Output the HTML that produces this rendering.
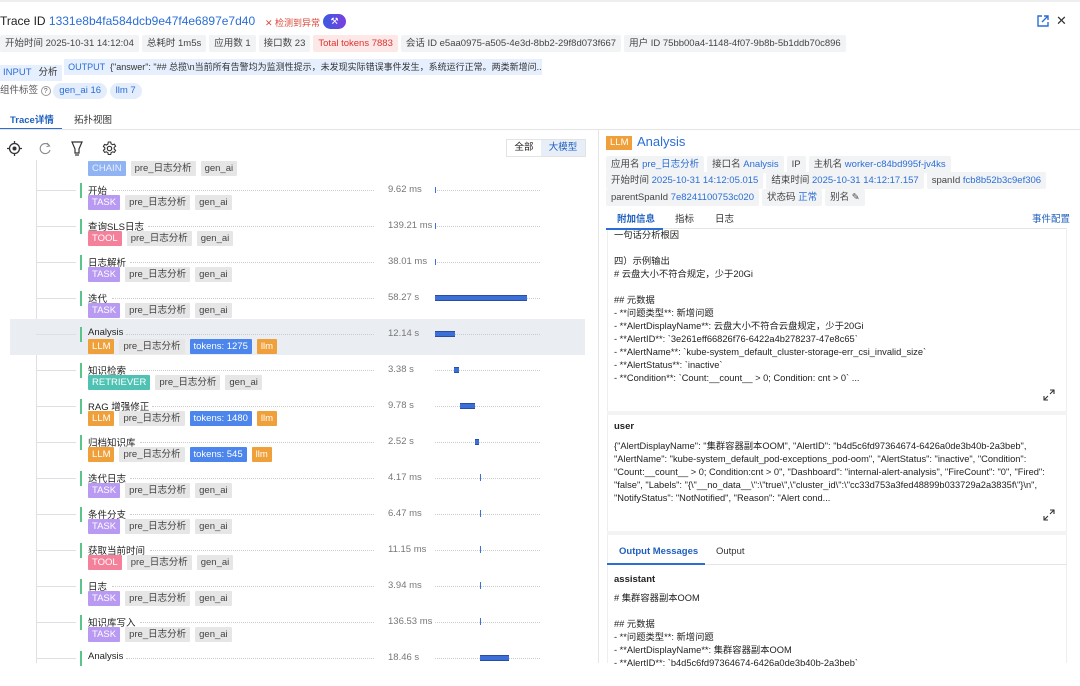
<!DOCTYPE html>
<html><head><meta charset="utf-8"><style>
*{box-sizing:border-box;margin:0;padding:0}
body{width:1080px;height:663px;overflow:hidden;background:#fff;font-family:"Liberation Sans","Noto Sans CJK SC",sans-serif;color:#333;font-size:10px;position:relative}
.a{position:absolute;white-space:nowrap}
.chip{display:inline-block;background:#f2f3f5;color:#444;height:17px;line-height:17px;padding:0 5px;margin-right:3px;font-size:9.5px;border-radius:2px}
.blue{color:#2a6ed6}
.tg{display:inline-block;height:15px;line-height:15px;padding:0 4px;margin-right:5px;font-size:9.5px;background:#e6e6e6;color:#444;border-radius:1px}
.task{background:#b99af2;color:#fff}.tool{background:#f4809a;color:#fff}.llm{background:#f0a03a;color:#fff}.tok{background:#4c86ec;color:#fff}.ret{background:#4fc2b4;color:#fff}.chain{background:#8fb3f3;color:#eef}
.row{position:absolute;left:0;width:590px;height:36px}
.row .h{position:absolute;left:36px;top:8px;width:40px;border-top:1px solid #dde1e6}
.row .g{position:absolute;left:80px;top:1px;width:2px;height:15px;background:#5ac48a}
.row .n{position:absolute;left:88px;top:1px;font-size:9.5px;color:#222}
.row .d{position:absolute;top:8px;right:216px;border-top:1px dotted #ccc}
.row .t{position:absolute;left:388px;top:2px;font-size:9.5px;color:#777}
.row .tl{position:absolute;left:435px;top:8px;width:105px;border-top:1px dotted #ccc}
.row .b{position:absolute;background:#3c6fd8;border-top:1px solid #2b4fa0;border-bottom:1px solid #2b4fa0}
.row .tags{position:absolute;left:88px;top:13px}
.txt{font-size:9.3px;line-height:13px;color:#222}
</style></head><body>
<div class="a" style="left:0;top:0;width:1080px;height:2px;background:#eee"></div>
<div class="a" style="left:0;top:14px;font-size:12px;color:#222">Trace ID <span class="blue">1331e8b4fa584dcb9e47f4e6897e7d40</span></div>
<div class="a" style="left:265px;top:16px;color:#d84a3a;font-size:9px">✕ 检测到异常</div>
<div class="a" style="left:323px;top:14px;width:23px;height:15px;border-radius:8px;background:linear-gradient(90deg,#3a5be0,#7b3fe0);color:#fff;font-size:9px;text-align:center;line-height:15px">⚒</div>
<svg class="a" style="left:1037px;top:15px" width="12" height="12" viewBox="0 0 12 12"><path d="M5 1H1v10h10V7M7 1h4v4M11 1L5 7" fill="none" stroke="#2a6ed6" stroke-width="1.4"/></svg>
<div class="a" style="left:1056px;top:13px;font-size:13px;color:#333">✕</div>
<div class="a" style="left:0;top:35px"><span class="chip">开始时间 2025-10-31 14:12:04</span><span class="chip">总耗时 1m5s</span><span class="chip">应用数 1</span><span class="chip">接口数 23</span><span class="chip" style="background:#fde8e8;color:#d33">Total tokens 7883</span><span class="chip">会话 ID e5aa0975-a505-4e3d-8bb2-29f8d073f667</span><span class="chip">用户 ID 75bb00a4-1148-4f07-9b8b-5b1ddb70c896</span></div>
<div class="a" style="left:0;top:59px;height:16px;line-height:16px;font-size:9.5px"><span style="background:#e6effd;padding:0 3px 0 3px;color:#2a6ed6;display:inline-block">INPUT</span><span style="background:#e6effd;padding:0 4px;display:inline-block">分析</span> <span style="background:#e6effd;padding:0 4px;display:inline-block;width:478px;overflow:hidden;font-size:9px"><span class="blue">OUTPUT</span> &nbsp;{"answer": "## 总揽\n当前所有告警均为监测性提示，未发现实际错误事件发生，系统运行正常。两类新增问...</span></div>
<div class="a" style="left:0;top:83px;font-size:9.5px;color:#555;line-height:16px">组件标签 <span style="display:inline-block;border:1px solid #999;border-radius:50%;width:10px;height:10px;font-size:7px;line-height:9px;text-align:center">?</span> <span style="background:#e3edfb;color:#2a6ed6;padding:0 6px;border-radius:8px;display:inline-block">gen_ai 16</span> <span style="background:#e3edfb;color:#2a6ed6;padding:0 6px;border-radius:8px;display:inline-block">llm 7</span></div>
<div class="a" style="left:10px;top:112px;font-size:9.5px;color:#1f5fbf;font-weight:bold">Trace详情</div>
<div class="a" style="left:74px;top:112px;font-size:9.5px;color:#333">拓扑视图</div>
<div class="a" style="left:0;top:128px;width:62px;height:2px;background:#2a6ed6"></div>
<div class="a" style="left:0;top:129px;width:1080px;border-top:1px solid #e5e5e5"></div>
<div class="a" style="left:598px;top:130px;height:533px;border-left:1px solid #e5e5e5"></div>
<!-- toolbar -->
<svg class="a" style="left:7px;top:141px" width="15" height="15" viewBox="0 0 15 15"><circle cx="7.5" cy="7.5" r="5" fill="none" stroke="#333" stroke-width="1.3"/><circle cx="7.5" cy="7.5" r="2" fill="#333"/><path d="M7.5 0v2.5M7.5 12.5V15M0 7.5h2.5M12.5 7.5H15" stroke="#333" stroke-width="1.3"/></svg>
<svg class="a" style="left:39px;top:142px" width="13" height="13" viewBox="0 0 13 13"><path d="M10.5 4A5 5 0 1 0 11 8" fill="none" stroke="#888" stroke-width="1.1"/><path d="M8 1l2.5 3-3 .5" fill="none" stroke="#888" stroke-width="1.1"/></svg>
<svg class="a" style="left:71px;top:141px" width="12" height="15" viewBox="0 0 12 15"><path d="M1 1h10L8 8v4H4V8z" fill="none" stroke="#333" stroke-width="1.2"/><path d="M4 14h4" stroke="#333" stroke-width="1.2"/></svg>
<svg class="a" style="left:102px;top:141px" width="15" height="15" viewBox="0 0 15 15"><circle cx="7.5" cy="7.5" r="2.2" fill="none" stroke="#333" stroke-width="1.2"/><path d="M6.3 1h2.4l.4 1.8 1.5.9 1.8-.6 1.2 2-1.4 1.3v1.7l1.4 1.3-1.2 2-1.8-.6-1.5.9-.4 1.8H6.3l-.4-1.8-1.5-.9-1.8.6-1.2-2 1.4-1.3V6.7L1.4 5.4l1.2-2 1.8.6 1.5-.9z" fill="none" stroke="#333" stroke-width="1.1"/></svg>
<div class="a" style="left:506px;top:139px;width:80px;height:18px;border:1px solid #e3e3e3;font-size:9.5px;line-height:16px"><span style="display:inline-block;width:34px;text-align:center;color:#222">全部</span><span style="display:inline-block;width:44px;text-align:center;background:#e8eef8;color:#1f5fbf">大模型</span></div>
<!-- tree -->
<div class="a" style="left:36px;top:160px;height:503px;border-left:1px solid #dde1e6"></div>
<div class="a" style="left:10px;top:319px;width:575px;height:36px;background:#eaedf2"></div>
<div class="a" style="left:88px;top:161px"><span class="tg chain">CHAIN</span><span class="tg">pre_日志分析</span><span class="tg">gen_ai</span></div>

<div class="row" style="top:182px"><div class="h"></div><div class="g"></div><div class="n">开始</div><div class="d" style="left:112px"></div><div class="t">9.62 ms</div><div class="tl"></div><div class="b" style="left:435px;top:5px;width:1px;height:6px;border:0"></div><div class="tags"><span class="tg task">TASK</span><span class="tg">pre_日志分析</span><span class="tg">gen_ai</span></div></div>
<div class="row" style="top:218px"><div class="h"></div><div class="g"></div><div class="n">查询SLS日志</div><div class="d" style="left:148px"></div><div class="t">139.21 ms</div><div class="tl"></div><div class="b" style="left:435px;top:5px;width:1px;height:6px;border:0"></div><div class="tags"><span class="tg tool">TOOL</span><span class="tg">pre_日志分析</span><span class="tg">gen_ai</span></div></div>
<div class="row" style="top:254px"><div class="h"></div><div class="g"></div><div class="n">日志解析</div><div class="d" style="left:130px"></div><div class="t">38.01 ms</div><div class="tl"></div><div class="b" style="left:435px;top:5px;width:1px;height:6px;border:0"></div><div class="tags"><span class="tg task">TASK</span><span class="tg">pre_日志分析</span><span class="tg">gen_ai</span></div></div>
<div class="row" style="top:290px"><div class="h"></div><div class="g"></div><div class="n">迭代</div><div class="d" style="left:112px"></div><div class="t">58.27 s</div><div class="tl"></div><div class="b" style="left:435px;top:5px;width:92px;height:6px"></div><div class="tags"><span class="tg task">TASK</span><span class="tg">pre_日志分析</span><span class="tg">gen_ai</span></div></div>
<div class="row" style="top:326px"><div class="h"></div><div class="g"></div><div class="n">Analysis</div><div class="d" style="left:126px"></div><div class="t">12.14 s</div><div class="tl"></div><div class="b" style="left:435px;top:5px;width:20px;height:6px"></div><div class="tags"><span class="tg llm">LLM</span><span class="tg">pre_日志分析</span><span class="tg tok">tokens: 1275</span><span class="tg llm">llm</span></div></div>
<div class="row" style="top:362px"><div class="h"></div><div class="g"></div><div class="n">知识检索</div><div class="d" style="left:130px"></div><div class="t">3.38 s</div><div class="tl"></div><div class="b" style="left:454px;top:5px;width:5px;height:6px"></div><div class="tags"><span class="tg ret">RETRIEVER</span><span class="tg">pre_日志分析</span><span class="tg">gen_ai</span></div></div>
<div class="row" style="top:398px"><div class="h"></div><div class="g"></div><div class="n">RAG 增强修正</div><div class="d" style="left:152px"></div><div class="t">9.78 s</div><div class="tl"></div><div class="b" style="left:460px;top:5px;width:15px;height:6px"></div><div class="tags"><span class="tg llm">LLM</span><span class="tg">pre_日志分析</span><span class="tg tok">tokens: 1480</span><span class="tg llm">llm</span></div></div>
<div class="row" style="top:434px"><div class="h"></div><div class="g"></div><div class="n">归档知识库</div><div class="d" style="left:140px"></div><div class="t">2.52 s</div><div class="tl"></div><div class="b" style="left:475px;top:5px;width:4px;height:6px"></div><div class="tags"><span class="tg llm">LLM</span><span class="tg">pre_日志分析</span><span class="tg tok">tokens: 545</span><span class="tg llm">llm</span></div></div>
<div class="row" style="top:470px"><div class="h"></div><div class="g"></div><div class="n">迭代日志</div><div class="d" style="left:130px"></div><div class="t">4.17 ms</div><div class="tl"></div><div class="b" style="left:480px;top:4px;width:1px;height:7px;border:0"></div><div class="tags"><span class="tg task">TASK</span><span class="tg">pre_日志分析</span><span class="tg">gen_ai</span></div></div>
<div class="row" style="top:506px"><div class="h"></div><div class="g"></div><div class="n">条件分支</div><div class="d" style="left:130px"></div><div class="t">6.47 ms</div><div class="tl"></div><div class="b" style="left:480px;top:4px;width:1px;height:7px;border:0"></div><div class="tags"><span class="tg task">TASK</span><span class="tg">pre_日志分析</span><span class="tg">gen_ai</span></div></div>
<div class="row" style="top:542px"><div class="h"></div><div class="g"></div><div class="n">获取当前时间</div><div class="d" style="left:150px"></div><div class="t">11.15 ms</div><div class="tl"></div><div class="b" style="left:480px;top:4px;width:1px;height:7px;border:0"></div><div class="tags"><span class="tg tool">TOOL</span><span class="tg">pre_日志分析</span><span class="tg">gen_ai</span></div></div>
<div class="row" style="top:578px"><div class="h"></div><div class="g"></div><div class="n">日志</div><div class="d" style="left:112px"></div><div class="t">3.94 ms</div><div class="tl"></div><div class="b" style="left:480px;top:4px;width:1px;height:7px;border:0"></div><div class="tags"><span class="tg task">TASK</span><span class="tg">pre_日志分析</span><span class="tg">gen_ai</span></div></div>
<div class="row" style="top:614px"><div class="h"></div><div class="g"></div><div class="n">知识库写入</div><div class="d" style="left:140px"></div><div class="t">136.53 ms</div><div class="tl"></div><div class="b" style="left:480px;top:4px;width:1px;height:7px;border:0"></div><div class="tags"><span class="tg task">TASK</span><span class="tg">pre_日志分析</span><span class="tg">gen_ai</span></div></div>
<div class="row" style="top:650px"><div class="h"></div><div class="g"></div><div class="n">Analysis</div><div class="d" style="left:126px"></div><div class="t">18.46 s</div><div class="tl"></div><div class="b" style="left:480px;top:5px;width:29px;height:6px"></div></div>

<!-- right panel -->
<div class="a" style="left:606px;top:136px;height:14px;line-height:14px;padding:0 4px;background:#f0a03a;color:#fff;font-size:9.5px">LLM</div>
<div class="a" style="left:637px;top:134px;font-size:13px;color:#2a6ed6">Analysis</div>
<div class="a" style="left:606px;top:156px"><span class="chip">应用名 <span class="blue">pre_日志分析</span></span><span class="chip">接口名 <span class="blue">Analysis</span></span><span class="chip">IP</span><span class="chip">主机名 <span class="blue">worker-c84bd995f-jv4ks</span></span></div>
<div class="a" style="left:606px;top:172px"><span class="chip">开始时间 <span class="blue">2025-10-31 14:12:05.015</span></span><span class="chip">结束时间 <span class="blue">2025-10-31 14:12:17.157</span></span><span class="chip">spanId <span class="blue">fcb8b52b3c9ef306</span></span></div>
<div class="a" style="left:606px;top:189px"><span class="chip">parentSpanId <span class="blue">7e8241100753c020</span></span><span class="chip">状态码 <span class="blue">正常</span></span><span class="chip">别名 ✎</span></div>
<div class="a" style="left:617px;top:211px;font-size:9.5px;color:#1f5fbf;font-weight:bold">附加信息</div>
<div class="a" style="left:675px;top:211px;font-size:9.5px">指标</div>
<div class="a" style="left:715px;top:211px;font-size:9.5px">日志</div>
<div class="a" style="left:1032px;top:211px;font-size:9.5px;color:#1f5fbf">事件配置</div>
<div class="a" style="left:606px;top:228px;width:461px;border-top:1px solid #e5e5e5"></div>
<div class="a" style="left:606px;top:228px;width:57px;height:2px;background:#2a6ed6"></div>
<div class="a" style="left:607px;top:230px;width:460px;height:433px;border-left:1px solid #eee;border-right:1px solid #eee"></div>
<div class="a txt" style="left:614px;top:229px">一句话分析根因<br><br>四）示例输出<br># 云盘大小不符合规定，少于20Gi<br><br>## 元数据<br>- **问题类型**: 新增问题<br>- **AlertDisplayName**: 云盘大小不符合云盘规定，少于20Gi<br>- **AlertID**: `3e261eff66826f76-6422a4b278237-47e8c65`<br>- **AlertName**: `kube-system_default_cluster-storage-err_csi_invalid_size`<br>- **AlertStatus**: `inactive`<br>- **Condition**: `Count:__count__ &gt; 0; Condition: cnt &gt; 0` ...</div>
<svg class="a" style="left:1043px;top:389px" width="12" height="12" viewBox="0 0 12 12"><path d="M7 1h4v4M11 1L7 5M5 11H1V7M1 11l4-4" fill="none" stroke="#333" stroke-width="1.1"/></svg>
<div class="a" style="left:607px;top:411px;width:460px;height:4px;background:#f3f3f3"></div>
<div class="a" style="left:614px;top:421px;font-size:9.5px;font-weight:bold;color:#222">user</div>
<div class="a txt" style="left:614px;top:440px;white-space:normal;width:448px">{"AlertDisplayName": "集群容器副本OOM", "AlertID": "b4d5c6fd97364674-6426a0de3b40b-2a3beb",<br>"AlertName": "kube-system_default_pod-exceptions_pod-oom", "AlertStatus": "inactive", "Condition":<br>"Count:__count__ &gt; 0; Condition:cnt &gt; 0", "Dashboard": "internal-alert-analysis", "FireCount": "0", "Fired":<br>"false", "Labels": "{\"__no_data__\":\"true\",\"cluster_id\":\"cc33d753a3fed48899b033729a2a3835f\"}\n",<br>"NotifyStatus": "NotNotified", "Reason": "Alert cond...</div>
<svg class="a" style="left:1043px;top:509px" width="12" height="12" viewBox="0 0 12 12"><path d="M7 1h4v4M11 1L7 5M5 11H1V7M1 11l4-4" fill="none" stroke="#333" stroke-width="1.1"/></svg>
<div class="a" style="left:607px;top:531px;width:460px;height:4px;background:#f3f3f3"></div>
<div class="a" style="left:619px;top:546px;font-size:9.5px;color:#1f5fbf;font-weight:bold">Output Messages</div>
<div class="a" style="left:716px;top:546px;font-size:9.5px">Output</div>
<div class="a" style="left:607px;top:564px;width:460px;border-top:1px solid #e5e5e5"></div>
<div class="a" style="left:607px;top:563px;width:98px;height:2px;background:#2a6ed6"></div>
<div class="a" style="left:614px;top:574px;font-size:9.5px;font-weight:bold;color:#222">assistant</div>
<div class="a txt" style="left:614px;top:592px"># 集群容器副本OOM<br><br>## 元数据<br>- **问题类型**: 新增问题<br>- **AlertDisplayName**: 集群容器副本OOM<br>- **AlertID**: `b4d5c6fd97364674-6426a0de3b40b-2a3beb`</div>
</body></html>
